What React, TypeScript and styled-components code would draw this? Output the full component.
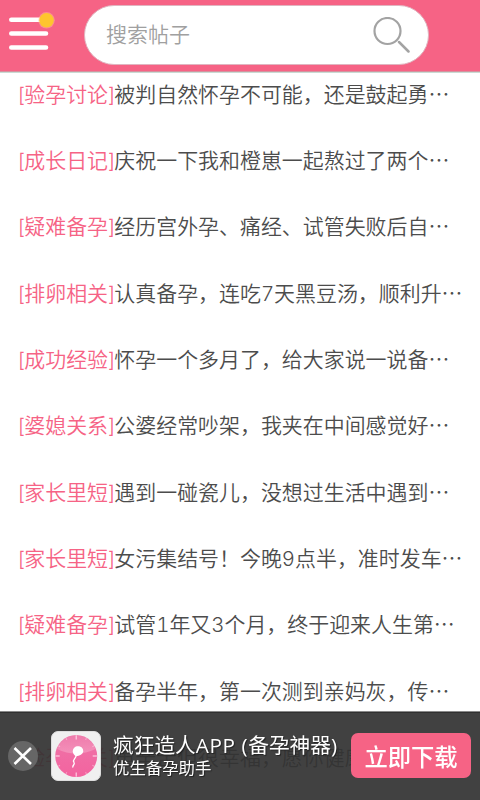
import React from "react";
import styled, { createGlobalStyle } from "styled-components";

const Global = createGlobalStyle`
  * { box-sizing: border-box; }
  body { margin: 0; background: #fff; overflow: hidden; font-family: "Noto Sans CJK SC", sans-serif; }
`;

const Page = styled.div`
  width: 480px;
  height: 800px;
  display: flex;
  flex-direction: column;
  overflow: hidden;
`;

const Header = styled.header`
  flex: none;
  height: 73px;
  display: flex;
  padding: 5px 0 0 9px;
  background: #f66385;
  border-bottom: 1px solid #c9dcd4;
  box-shadow: inset 0 -1px #d3939f;
`;

const MenuButton = styled.button`
  width: 48px;
  height: 48px;
  margin: 5px 27px 0 0;
  padding: 0;
  border: 0;
  background: none;
`;

const SearchBox = styled.label`
  width: 345px;
  height: 60px;
  display: flex;
  align-items: center;
  justify-content: space-between;
  padding: 0 18px 0 21px;
  border-radius: 30px;
  background: #fff;
  border: 1px solid #e0b5c0;
`;

const SearchInput = styled.input`
  width: 220px;
  padding: 0 0 4px;
  border: 0;
  outline: 0;
  background: none;
  font: 350 21px "Noto Sans CJK SC", sans-serif;
  &::placeholder { color: #a0a0a0; opacity: 1; }
`;

const Posts = styled.main`
  flex: none;
  display: flex;
  flex-direction: column;
  margin-top: -13.4px;
  padding-left: 18px;
`;

const Post = styled.a`
  height: 66.37px;
  line-height: 66px;
  font-size: 20.95px;
  font-weight: 350;
  color: #4c4c4c;
  white-space: nowrap;
`;

const Tag = styled.span`
  color: #f66385;
`;

const Bracket = styled.span`
  display: inline-block;
  width: 6.3px;
  font-family: Inter, sans-serif;
  font-size: 20px;
  font-weight: 300;
  line-height: 1;
`;

const Digit = styled.span`
  font-family: Inter, sans-serif;
  font-size: 20.4px;
  font-weight: 300;
  font-variant-numeric: tabular-nums;
  line-height: 1;
`;

const Banner = styled.aside`
  position: fixed;
  left: 0;
  bottom: 0;
  width: 480px;
  height: 89px;
  display: flex;
  align-items: center;
  padding: 0 9px 0 8px;
  background: rgba(51, 51, 51, 0.93);
  box-shadow: inset 0 1px #8a8a8a, inset 0 2px #303030;
  color: #fff;
`;

const CloseButton = styled.button`
  width: 30px;
  height: 30px;
  margin-right: 13px;
  padding: 0;
  border: 0;
  border-radius: 50%;
  background: #666;
`;

const Copy = styled.div`
  flex: 1;
  margin-left: 12px;
  padding-bottom: 3px;
  white-space: nowrap;
  text-shadow: 1px 1px 1px #222;
`;

const AppName = styled.div`
  font-size: 20.7px;
  line-height: 26px;
`;

const Latin = styled.span`
  font-family: "Open Sans", sans-serif;
  letter-spacing: 0.6px;
  line-height: 1;
`;

const Tagline = styled.div`
  font-size: 16.4px;
  line-height: 20px;
`;

const Download = styled.button`
  width: 120px;
  height: 45px;
  padding: 0;
  border: 0;
  border-radius: 7px;
  background: #f66385;
  color: #fff;
  font: 500 23.3px "Noto Sans CJK SC", sans-serif;
`;

const posts = [
  ["验孕讨论", "被判自然怀孕不可能，还是鼓起勇…"],
  ["成长日记", "庆祝一下我和橙崽一起熬过了两个…"],
  ["疑难备孕", "经历宫外孕、痛经、试管失败后自…"],
  ["排卵相关", "认真备孕，连吃7天黑豆汤，顺利升…"],
  ["成功经验", "怀孕一个多月了，给大家说一说备…"],
  ["婆媳关系", "公婆经常吵架，我夹在中间感觉好…"],
  ["家长里短", "遇到一碰瓷儿，没想过生活中遇到…"],
  ["家长里短", "女污集结号！今晚9点半，准时发车…"],
  ["疑难备孕", "试管1年又3个月，终于迎来人生第…"],
  ["排卵相关", "备孕半年，第一次测到亲妈灰，传…"],
  ["验孕相关", "虽辛苦但很幸福，愿你健康"],
];

const ticks = Array.from({ length: 12 }, (_, i) => i * 30);

function MenuIcon() {
  return (
    <svg width="48" height="48" viewBox="9 10 48 48">
      <path d="M11.3 19.7H46M11.3 33.5H46M11.3 47.5H46" stroke="#fff" strokeWidth="4.6" strokeLinecap="round" />
      <circle cx="46.5" cy="20.3" r="8.3" fill="#ffc1a0" opacity=".45" />
      <circle cx="46.5" cy="20.3" r="7.2" fill="#fec52e" />
    </svg>
  );
}

function SearchIcon() {
  return (
    <svg width="37" height="37" viewBox="373 17 37 37" fill="none" stroke="#a3a3a3">
      <circle cx="387.5" cy="31" r="13" strokeWidth="2.2" />
      <path d="M399 42L408.5 51.5" strokeWidth="2.5" strokeLinecap="round" />
    </svg>
  );
}

function AppIcon() {
  return (
    <svg width="50" height="50" viewBox="0 0 50 50">
      <defs>
        <linearGradient id="dial" x1="0" y1="0" x2="0" y2="1">
          <stop offset="0" stopColor="#ee75a8" />
          <stop offset="1" stopColor="#f3639f" />
        </linearGradient>
        <linearGradient id="gloss" x1="0" y1="0" x2="0" y2="1">
          <stop offset="0" stopColor="#fff" stopOpacity=".05" />
          <stop offset="1" stopColor="#fff" stopOpacity=".25" />
        </linearGradient>
      </defs>
      <rect x=".5" y=".5" width="49" height="49" rx="6.5" fill="#f0f0f0" stroke="#ddd" />
      <circle cx="25.2" cy="25" r="21" fill="url(#dial)" />
      <path d="M6 18A20.5 20.5 0 0 1 44.5 18Q25 27 6 18Z" fill="url(#gloss)" />
      {ticks.map((a) => (
        <path
          key={a}
          d={a % 90 ? "M25.2 4.5V6.3" : "M25.2 4.3V8.5"}
          stroke="#ffd9e9"
          strokeWidth="1.1"
          opacity={a % 90 ? 0.5 : 1}
          transform={`rotate(${a} 25.2 25)`}
        />
      ))}
      <path d="M25.2 24C25.2 28.5 20.8 28 23 31.5C24.3 33.5 21.8 33.5 21.8 36" fill="none" stroke="#fff" strokeWidth="1.3" strokeLinecap="round" />
      <path d="M27 15.3C30.5 15.3 32.3 17.6 32.2 20.3C32 23.5 28.5 24.8 25 25.2C22.8 24 21.8 22.3 21.8 20.3C21.8 17.4 24 15.3 27 15.3Z" fill="#fff" />
    </svg>
  );
}

function Title({ text }: { text: string }) {
  return (
    <>
      {text.split(/(\d)/).map((part, i) => (/^\d$/.test(part) ? <Digit key={i}>{part}</Digit> : part))}
    </>
  );
}

export default function App() {
  return (
    <Page>
      <Global />
      <Header>
        <MenuButton aria-label="菜单"><MenuIcon /></MenuButton>
        <SearchBox>
          <SearchInput placeholder="搜索帖子" />
          <SearchIcon />
        </SearchBox>
      </Header>
      <Posts>
        {posts.map(([tag, title], i) => (
          <Post key={i}>
            <Tag><Bracket>[</Bracket>{tag}<Bracket>]</Bracket></Tag>
            <Title text={title} />
          </Post>
        ))}
      </Posts>
      <Banner>
        <CloseButton aria-label="关闭">
          <svg width="30" height="30" viewBox="0 0 30 30">
            <path d="M6.5 7L23 23M23 7L6.5 23" stroke="#fff" strokeWidth="2.6" />
          </svg>
        </CloseButton>
        <AppIcon />
        <Copy>
          <AppName>疯狂造人<Latin>APP (</Latin>备孕神器<Latin>)</Latin></AppName>
          <Tagline>优生备孕助手</Tagline>
        </Copy>
        <Download>立即下载</Download>
      </Banner>
    </Page>
  );
}
